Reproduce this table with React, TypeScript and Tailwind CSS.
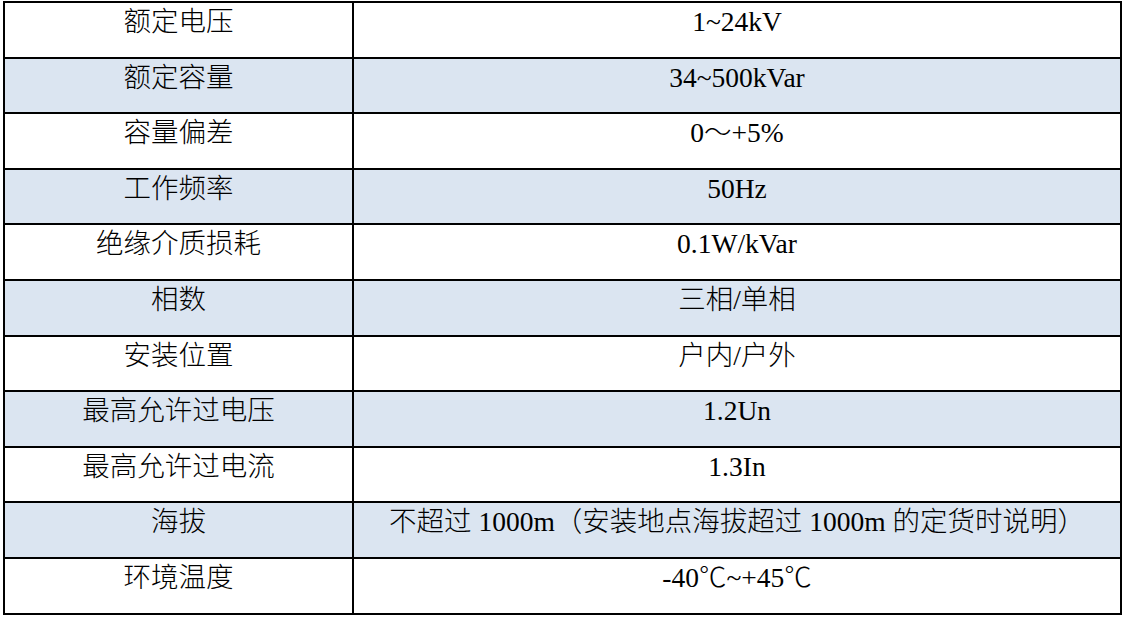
import React from "react";

const rows: [string, string][] = [
  ["额定电压", "1~24kV"],
  ["额定容量", "34~500kVar"],
  ["容量偏差", "0～+5%"],
  ["工作频率", "50Hz"],
  ["绝缘介质损耗", "0.1W/kVar"],
  ["相数", "三相/单相"],
  ["安装位置", "户内/户外"],
  ["最高允许过电压", "1.2Un"],
  ["最高允许过电流", "1.3In"],
  ["海拔", "不超过 1000m（安装地点海拔超过 1000m 的定货时说明）"],
  ["环境温度", "-40℃~+45℃"],
];

export default function App() {
  return (
    <div className="min-h-screen bg-white pt-[1px] pl-[3px]">
      <div
        className="w-[1119px] border-x-2 border-t-2 border-black text-[27.5px] font-light leading-[30px] text-black"
        style={{ fontFamily: '"Liberation Serif", "Noto Sans CJK SC", serif' }}
      >
        {rows.map(([name, value], i) => (
          <div
            key={name}
            className={`flex h-[55.6px] border-b-2 border-black ${
              i % 2 === 1 ? "bg-[#dbe5f1]" : "bg-white"
            }`}
          >
            <div className="w-[349px] shrink-0 border-r-2 border-black pt-[4px] text-center whitespace-nowrap">
              {name}
            </div>
            <div className="flex-1 pt-[4px] text-center whitespace-nowrap">
              {value}
            </div>
          </div>
        ))}
      </div>
    </div>
  );
}
